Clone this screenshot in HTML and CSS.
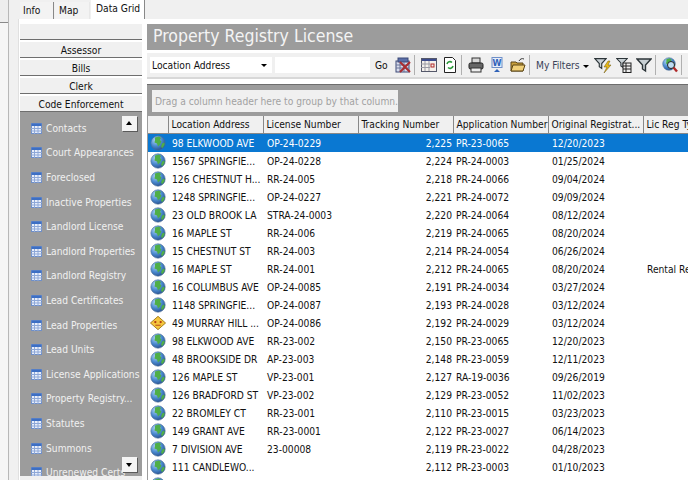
FILE: index.html
```html
<!DOCTYPE html>
<html lang="en">

<head>
    <meta charset="UTF-8">
    <meta name="viewport" content="width=device-width, initial-scale=1.0">
    <title>Property Registry License</title>
    <link rel="stylesheet" href="styles.css">
</head>

<body>
    <!-- Shared icons -->
    <svg class="defs" width="0" height="0">
        <defs>
            <radialGradient id="sea" cx="35%" cy="30%" r="75%">
                <stop offset="0" stop-color="#b4d8f6" />
                <stop offset="0.55" stop-color="#4a8ad0" />
                <stop offset="1" stop-color="#27508f" />
            </radialGradient>
            <symbol id="globe" viewBox="0 0 16 16">
                <circle cx="8" cy="8" r="7.2" fill="url(#sea)" stroke="#4a6d96" stroke-width="0.6" />
                <path d="M5 2.5l4-1 2 1.5-1 2 1.5 1.5-1.5 3-2 2-1-3-2.5-1 0.5-2.5z" fill="#4fae48" />
                <path d="M12 8.5l2.5-1 0 2.5-2 3-1.5-1z" fill="#4fae48" />
            </symbol>
            <symbol id="warn" viewBox="0 0 18 16">
                <path d="M9 0.5L17.5 8 9 15.5 0.5 8z" fill="#f5c63c" stroke="#9a7414" />
                <circle cx="6" cy="7" r="1.3" fill="#b03a10" />
                <circle cx="12" cy="7" r="1.3" fill="#b03a10" />
                <path d="M6 10.5h6" stroke="#b03a10" />
            </symbol>
            <symbol id="tbl" viewBox="0 0 11 11">
                <rect x="0.5" y="0.5" width="10" height="10" fill="#e8eefa" stroke="#6f8fc8" />
                <rect x="0.5" y="0.5" width="10" height="2.5" fill="#3d6fc4" />
                <path d="M0 5.5h11M0 8h11M3.5 3v8M7 3v8" stroke="#8ea8d8" />
            </symbol>
            <symbol id="funnel" viewBox="0 0 16 16">
                <path d="M1 2h14l-5.5 6v6l-3-2V8z" fill="#c8d0d4" stroke="#2c3438" stroke-width="1.4" />
            </symbol>
        </defs>
    </svg>

    <div class="page">
        <div class="side-strip"><div class="side-head"></div></div>

        <div class="workspace">
            <div class="tabs">
                <span class="tab tab-info">Info</span>
                <span class="tab tab-map">Map</span>
                <span class="tab active">Data Grid</span>
            </div>

            <div class="tab-body">
                <!-- Left menu -->
                <div class="menu">
                    <div class="menu-btn"></div>
                    <div class="menu-btn">Assessor</div>
                    <div class="menu-btn">Bills</div>
                    <div class="menu-btn">Clerk</div>
                    <div class="menu-btn">Code Enforcement</div>
                    <div class="menu-list">
                        <div class="menu-item"><svg><use href="#tbl" /></svg>Contacts</div>
                        <div class="menu-item"><svg><use href="#tbl" /></svg>Court Appearances</div>
                        <div class="menu-item"><svg><use href="#tbl" /></svg>Foreclosed</div>
                        <div class="menu-item"><svg><use href="#tbl" /></svg>Inactive Properties</div>
                        <div class="menu-item"><svg><use href="#tbl" /></svg>Landlord License</div>
                        <div class="menu-item"><svg><use href="#tbl" /></svg>Landlord Properties</div>
                        <div class="menu-item"><svg><use href="#tbl" /></svg>Landlord Registry</div>
                        <div class="menu-item"><svg><use href="#tbl" /></svg>Lead Certificates</div>
                        <div class="menu-item"><svg><use href="#tbl" /></svg>Lead Properties</div>
                        <div class="menu-item"><svg><use href="#tbl" /></svg>Lead Units</div>
                        <div class="menu-item"><svg><use href="#tbl" /></svg>License Applications</div>
                        <div class="menu-item"><svg><use href="#tbl" /></svg>Property Registry...</div>
                        <div class="menu-item"><svg><use href="#tbl" /></svg>Statutes</div>
                        <div class="menu-item"><svg><use href="#tbl" /></svg>Summons</div>
                        <div class="menu-item"><svg><use href="#tbl" /></svg>Unrenewed Certs</div>
                        <span class="scroll-btn up"></span>
                        <span class="scroll-btn down"></span>
                    </div>
                    <div class="menu-foot"></div>
                </div>

                <!-- Main panel -->
                <div class="main">
                    <div class="title-bar">Property Registry License</div>

                    <div class="toolbar">
                        <div class="field-select">Location Address<span class="caret"></span></div>
                        <div class="field-input"></div>
                        <span class="go">Go</span>

                        <svg class="tool-icon" viewBox="0 0 16 16">
                            <rect x="1" y="4" width="13" height="11" fill="#d8dcec" stroke="#3c4a78" />
                            <rect x="3" y="1" width="10" height="4" fill="#5a6ea8" stroke="#3c4a78" />
                            <path d="M1 8h13M1 11h13M5 5v10M9 5v10" stroke="#6a7498" />
                            <path d="M5 5l10 10M15 5L5 15" stroke="#a82c30" stroke-width="2" />
                        </svg>
                        <span class="sep"></span>
                        <svg class="tool-icon" viewBox="0 0 16 16">
                            <rect x="0.5" y="1.5" width="15" height="13" fill="#f4f0ec" stroke="#55586a" />
                            <rect x="1" y="2" width="14" height="2" fill="#3b4a8c" />
                            <path d="M0 7h9M0 10.5h9M4 4v10M8 4v10" stroke="#9a9aa4" />
                            <rect x="10" y="7" width="3" height="3" fill="none" stroke="#b02828" />
                        </svg>
                        <svg class="tool-icon narrow doc" viewBox="0 0 12 16">
                            <path d="M0.5 0.5h8l3 3v12h-11z" fill="#fff" stroke="#222" />
                            <path d="M3 7a3 3 0 0 1 5-1.5M9 9a3 3 0 0 1-5 1.5" fill="none" stroke="#2c9a3c" stroke-width="1.6" />
                        </svg>
                        <span class="sep"></span>
                        <svg class="tool-icon" viewBox="0 0 16 16">
                            <rect x="4" y="1" width="8" height="5" fill="#d8d8d8" stroke="#333" />
                            <rect x="1" y="6" width="14" height="6" rx="1.5" fill="#666" stroke="#222" />
                            <rect x="3" y="11" width="10" height="4" fill="#eee" stroke="#333" />
                        </svg>
                        <svg class="tool-icon narrow" viewBox="0 0 12 16">
                            <rect x="1" y="0.5" width="10" height="10" fill="#e8eefa" stroke="#6f8fc8" />
                            <text class="word-letter" x="6" y="9" text-anchor="middle">W</text>
                            <path d="M3 15l3-3 3 3z" fill="#2f62b8" />
                        </svg>
                        <svg class="tool-icon" viewBox="0 0 16 16">
                            <path d="M1 5h5l1 1h6v8H1z" fill="#c8a03c" stroke="#5a4414" />
                            <path d="M3 8h12l-2 6H1z" fill="#f0d078" stroke="#5a4414" />
                            <path d="M9 4c1-2 3-3 5-2" fill="none" stroke="#333" />
                        </svg>
                        <span class="sep"></span>
                        <span class="filters">My Filters<span class="caret"></span></span>
                        <svg class="tool-icon wide" viewBox="0 0 18 16">
                            <use href="#funnel" width="13" height="13" />
                            <path d="M14 4l-4 6h3l-3 6 7-8h-3l2-4z" fill="#e8b818" stroke="#6a5408" stroke-width="0.5" />
                        </svg>
                        <svg class="tool-icon tight" viewBox="0 0 16 16">
                            <use href="#funnel" width="12" height="12" />
                            <rect x="7" y="6" width="8" height="9.5" fill="#eee" stroke="#222" />
                            <path d="M7 9h8M7 12h8M10 6v9" stroke="#222" />
                        </svg>
                        <svg class="tool-icon" viewBox="0 0 16 16"><use href="#funnel" /></svg>
                        <span class="sep"></span>
                        <svg class="tool-icon" viewBox="0 0 16 16">
                            <use href="#globe" width="14" height="14" />
                            <circle cx="9" cy="8" r="3.5" fill="#bcdcf4" stroke="#222" />
                            <path d="M11.5 10.5L15 14.5" stroke="#b02828" stroke-width="2.4" />
                        </svg>
                        <span class="sep"></span>
                    </div>

                    <div class="grid-panel">
                        <div class="group-box">Drag a column header here to group by that column.</div>
                        <table class="grid">
                            <thead>
                                <tr>
                                    <th class="col-icon"></th>
                                    <th>Location Address</th>
                                    <th>License Number</th>
                                    <th>Tracking Number</th>
                                    <th>Application Number</th>
                                    <th>Original Registrat...</th>
                                    <th>Lic Reg Type</th>
                                </tr>
                            </thead>
                            <tbody>
                                <tr class="selected"><td class="mark"><svg class="globe"><use href="#globe" /></svg></td><td>98 ELKWOOD AVE</td><td>OP-24-0229</td><td class="num">2,225</td><td class="app">PR-23-0065</td><td>12/20/2023</td><td></td></tr>
                                <tr><td class="mark"><svg class="globe"><use href="#globe" /></svg></td><td>1567 SPRINGFIE...</td><td>OP-24-0228</td><td class="num">2,224</td><td class="app">PR-24-0003</td><td>01/25/2024</td><td></td></tr>
                                <tr><td class="mark"><svg class="globe"><use href="#globe" /></svg></td><td>126 CHESTNUT H...</td><td>RR-24-005</td><td class="num">2,218</td><td class="app">PR-24-0066</td><td>09/04/2024</td><td></td></tr>
                                <tr><td class="mark"><svg class="globe"><use href="#globe" /></svg></td><td>1248 SPRINGFIE...</td><td>OP-24-0227</td><td class="num">2,221</td><td class="app">PR-24-0072</td><td>09/09/2024</td><td></td></tr>
                                <tr><td class="mark"><svg class="globe"><use href="#globe" /></svg></td><td>23 OLD BROOK LA</td><td>STRA-24-0003</td><td class="num">2,220</td><td class="app">PR-24-0064</td><td>08/12/2024</td><td></td></tr>
                                <tr><td class="mark"><svg class="globe"><use href="#globe" /></svg></td><td>16 MAPLE ST</td><td>RR-24-006</td><td class="num">2,219</td><td class="app">PR-24-0065</td><td>08/20/2024</td><td></td></tr>
                                <tr><td class="mark"><svg class="globe"><use href="#globe" /></svg></td><td>15 CHESTNUT ST</td><td>RR-24-003</td><td class="num">2,214</td><td class="app">PR-24-0054</td><td>06/26/2024</td><td></td></tr>
                                <tr><td class="mark"><svg class="globe"><use href="#globe" /></svg></td><td>16 MAPLE ST</td><td>RR-24-001</td><td class="num">2,212</td><td class="app">PR-24-0065</td><td>08/20/2024</td><td>Rental Registry</td></tr>
                                <tr><td class="mark"><svg class="globe"><use href="#globe" /></svg></td><td>16 COLUMBUS AVE</td><td>OP-24-0085</td><td class="num">2,191</td><td class="app">PR-24-0034</td><td>03/27/2024</td><td></td></tr>
                                <tr><td class="mark"><svg class="globe"><use href="#globe" /></svg></td><td>1148 SPRINGFIE...</td><td>OP-24-0087</td><td class="num">2,193</td><td class="app">PR-24-0028</td><td>03/12/2024</td><td></td></tr>
                                <tr><td class="mark"><svg class="globe"><use href="#warn" /></svg></td><td>49 MURRAY HILL ...</td><td>OP-24-0086</td><td class="num">2,192</td><td class="app">PR-24-0029</td><td>03/12/2024</td><td></td></tr>
                                <tr><td class="mark"><svg class="globe"><use href="#globe" /></svg></td><td>98 ELKWOOD AVE</td><td>RR-23-002</td><td class="num">2,150</td><td class="app">PR-23-0065</td><td>12/20/2023</td><td></td></tr>
                                <tr><td class="mark"><svg class="globe"><use href="#globe" /></svg></td><td>48 BROOKSIDE DR</td><td>AP-23-003</td><td class="num">2,148</td><td class="app">PR-23-0059</td><td>12/11/2023</td><td></td></tr>
                                <tr><td class="mark"><svg class="globe"><use href="#globe" /></svg></td><td>126 MAPLE ST</td><td>VP-23-001</td><td class="num">2,127</td><td class="app">RA-19-0036</td><td>09/26/2019</td><td></td></tr>
                                <tr><td class="mark"><svg class="globe"><use href="#globe" /></svg></td><td>126 BRADFORD ST</td><td>VP-23-002</td><td class="num">2,129</td><td class="app">PR-23-0052</td><td>11/02/2023</td><td></td></tr>
                                <tr><td class="mark"><svg class="globe"><use href="#globe" /></svg></td><td>22 BROMLEY CT</td><td>RR-23-001</td><td class="num">2,110</td><td class="app">PR-23-0015</td><td>03/23/2023</td><td></td></tr>
                                <tr><td class="mark"><svg class="globe"><use href="#globe" /></svg></td><td>149 GRANT AVE</td><td>RR-23-0001</td><td class="num">2,122</td><td class="app">PR-23-0027</td><td>06/14/2023</td><td></td></tr>
                                <tr><td class="mark"><svg class="globe"><use href="#globe" /></svg></td><td>7 DIVISION AVE</td><td>23-00008</td><td class="num">2,119</td><td class="app">PR-23-0022</td><td>04/28/2023</td><td></td></tr>
                                <tr><td class="mark"><svg class="globe"><use href="#globe" /></svg></td><td>111 CANDLEWO...</td><td></td><td class="num">2,112</td><td class="app">PR-23-0003</td><td>01/10/2023</td><td></td></tr>
                                <tr><td class="mark"><svg class="globe"><use href="#globe" /></svg></td><td></td><td></td><td></td><td></td><td></td><td></td></tr>
                            </tbody>
                        </table>
                    </div>
                </div>
            </div>
        </div>
    </div>
</body>

</html>
```

FILE: styles.css
```css
html,
body {
    margin: 0;
    height: 480px;
    overflow: hidden;
}

body {
    font-family: "DejaVu Sans", "Noto Sans", sans-serif;
    font-stretch: condensed;
    font-size: 10.2px;
    color: #111;
    background-color: #f0f0f0;
}

.defs {
    position: absolute;
}

.page {
    display: flex;
    width: 688px;
    height: 480px;
}

.side-strip {
    width: 8px;
    flex-shrink: 0;
    background-color: #f6f6f6;
    border-right: 1px solid #b8b8b8;
    margin-right: 9px;
}

.side-head {
    height: 22px;
    background-color: #eeeeee;
    border-bottom: 1px solid #8a8a8a;
}

.workspace {
    flex: 1;
    min-width: 0;
    display: flex;
    flex-direction: column;
}

/* Tabs */
.tabs {
    display: flex;
    align-items: flex-end;
    height: 19px;
    padding-left: 2px;
    flex-shrink: 0;
}

.tab {
    height: 17px;
    line-height: 17px;
    margin-right: 1px;
    background-color: #f3f3f3;
    border-right: 1px solid #888;
    box-sizing: border-box;
}

.tab-info {
    width: 34px;
    padding-left: 3px;
}

.tab-map {
    width: 35px;
    padding-left: 4px;
    border-right-color: #e8e8e8;
}

.tab.active {
    width: 54px;
    height: 19px;
    padding-left: 5px;
    background-color: #fff;
}

.tab-body {
    flex: 1;
    display: flex;
    min-height: 0;
    padding-top: 5px;
    background-color: #fff;
    border-left: 1px solid #e0e0e0;
}

/* Left menu */
.menu {
    width: 122px;
    margin-left: 1px;
    display: flex;
    flex-direction: column;
    flex-shrink: 0;
}

.menu-btn {
    height: 15px;
    line-height: 17px;
    margin-bottom: 2px;
    text-align: center;
    background-color: #f0f0f0;
    border-bottom: 1px solid #6e6e6e;
    flex-shrink: 0;
}

.menu-btn:nth-child(5) {
    margin-bottom: 0;
}

.menu-list {
    position: relative;
    flex: 1;
    min-height: 0;
    overflow: hidden;
    padding: 4px 0 0 11px;
    background-color: #9c9c9c;
    color: #f0f0f0;
}

.menu-foot {
    height: 4px;
    flex-shrink: 0;
    background-color: #f0f0f0;
}

.menu-item {
    display: flex;
    align-items: center;
    gap: 4px;
    height: 24.6px;
    white-space: nowrap;
}

.menu-item svg {
    width: 11px;
    height: 11px;
    flex-shrink: 0;
}

.scroll-btn {
    position: absolute;
    right: 5px;
    width: 15px;
    height: 15px;
    background-color: #f4f4f4;
    box-shadow: 1px 1px 0 #5a5a5a;
}

.scroll-btn::after {
    content: "";
    position: absolute;
    left: 4px;
    border-left: 3.5px solid transparent;
    border-right: 3.5px solid transparent;
}

.scroll-btn.up {
    top: 4px;
}

.scroll-btn.up::after {
    top: 5px;
    border-bottom: 4px solid #000;
}

.scroll-btn.down {
    bottom: 4px;
}

.scroll-btn.down::after {
    top: 6px;
    border-top: 4px solid #000;
}

/* Main panel */
.main {
    flex: 1;
    min-width: 0;
    margin-left: 5px;
    display: flex;
    flex-direction: column;
}

.title-bar {
    height: 26px;
    line-height: 25px;
    padding-left: 6px;
    font-size: 17.5px;
    color: #f4f4f4;
    background-color: #9c9c9c;
    flex-shrink: 0;
}

.toolbar {
    display: flex;
    align-items: center;
    height: 24px;
    margin-top: 3px;
    padding-left: 3px;
    background-color: #f0f0f0;
    border-bottom: 2px solid #d8d8d8;
    flex-shrink: 0;
}

.field-select {
    position: relative;
    width: 120px;
    height: 16px;
    line-height: 18px;
    padding-left: 2px;
    margin-right: 3px;
    background-color: #fff;
    flex-shrink: 0;
}

.field-select .caret {
    position: absolute;
    right: 5px;
    top: 7px;
}

.caret {
    display: inline-block;
    border-left: 3px solid transparent;
    border-right: 3px solid transparent;
    border-top: 3px solid #000;
    margin-left: 3px;
    vertical-align: middle;
}

.field-input {
    width: 95px;
    height: 16px;
    background-color: #fff;
    flex-shrink: 0;
}

.go {
    width: 14px;
    margin: 0 6px 0 5px;
    padding-top: 1px;
    flex-shrink: 0;
}

.tool-icon {
    width: 16px;
    height: 16px;
    margin-right: 7px;
    flex-shrink: 0;
}

.tool-icon.narrow {
    width: 12px;
}

.tool-icon.doc {
    margin-right: 9px;
}

.tool-icon.wide {
    width: 18px;
    margin-right: 4px;
}

.tool-icon.tight {
    margin-right: 4px;
}

.word-letter {
    font-size: 9px;
    font-weight: bold;
    fill: #2f62b8;
}

.sep {
    width: 1px;
    height: 20px;
    background-color: #b0b0b0;
    margin: 0 6px 0 -4px;
    flex-shrink: 0;
}

.filters {
    width: 51px;
    padding-top: 1px;
    color: #3a4258;
    margin-right: 7px;
    white-space: nowrap;
    flex-shrink: 0;
}

/* Grid */
.grid-panel {
    flex: 1;
    min-height: 0;
    overflow: hidden;
    margin-top: 5px;
    padding: 5px 0 0 1px;
    background-color: #9c9c9c;
    border-top: 1px solid #6e6e6e;
}

.group-box {
    width: 243px;
    height: 22px;
    line-height: 24px;
    margin: 0 0 4px 4px;
    padding-left: 3px;
    color: #a2a2a2;
    background-color: #f0f0f0;
    white-space: nowrap;
}

.grid {
    table-layout: fixed;
    width: 590px;
    border-collapse: collapse;
    background-color: #fff;
}

.grid th {
    width: 95px;
    height: 17px;
    padding: 1px 0 0 3px;
    text-align: left;
    font-weight: normal;
    white-space: nowrap;
    overflow: hidden;
    background-color: #f0f0f0;
    border-right: 1px solid #888;
    border-bottom: 1px solid #888;
    box-sizing: border-box;
}

.grid th.col-icon {
    width: 20px;
}

.grid td {
    height: 17px;
    padding: 1px 0 0 4px;
    white-space: nowrap;
    overflow: hidden;
}

.grid td.mark {
    height: 18px;
    padding: 0 0 0 2px;
}

.grid td.num {
    text-align: right;
    padding: 1px 1px 0 0;
}

.grid td.app {
    padding-left: 3px;
}

.globe {
    display: block;
    width: 16px;
    height: 16px;
}

.grid .selected td {
    color: #fff;
    background-color: #0a78d2;
}
```
